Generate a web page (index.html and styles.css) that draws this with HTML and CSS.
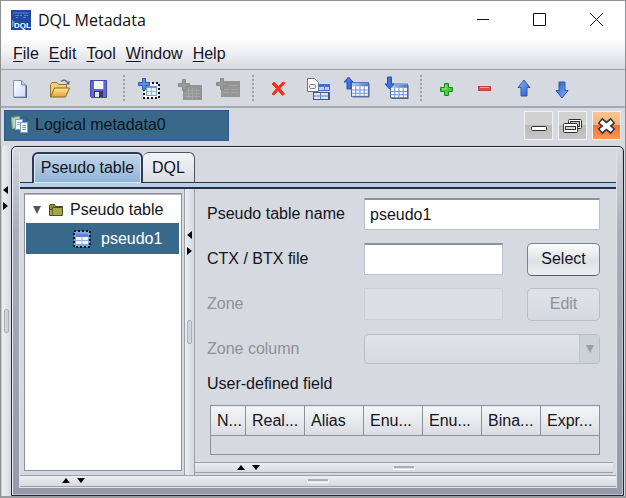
FILE: index.html
```html
<!DOCTYPE html>
<html lang="en">
<head>
<meta charset="utf-8">
<title>DQL Metadata</title>
<link rel="stylesheet" href="styles.css">
</head>
<body>
<svg class="defs" aria-hidden="true">
  <defs>
    <linearGradient id="blue" x1="0" y1="0" x2="1" y2="1"><stop offset="0" stop-color="#8fb6f2"/><stop offset="1" stop-color="#2457c4"/></linearGradient>
    <linearGradient id="head" x1="0" y1="0" x2="1" y2="0"><stop offset="0" stop-color="#a9c4f0"/><stop offset="1" stop-color="#4a78cf"/></linearGradient>
    <linearGradient id="sheet" x1="0" y1="0" x2="1" y2="1"><stop offset="0" stop-color="#ffffff"/><stop offset="1" stop-color="#cfdaf0"/></linearGradient>
    <linearGradient id="gold" x1="0" y1="0" x2="0" y2="1"><stop offset="0" stop-color="#ffe9a0"/><stop offset="1" stop-color="#e0a233"/></linearGradient>
    <symbol id="grid-blue" viewBox="0 0 18 15">
      <rect x="1.5" y="1.5" width="16" height="13" fill="#46556e"/>
      <rect x=".5" y=".5" width="16" height="13" fill="#fff" stroke="#4c6ba6"/>
      <rect x="1" y="1" width="15" height="3" fill="url(#head)"/>
      <path d="M1 7.500h15M1 10.500h15M4.500 4v9M8.500 4v9M12.500 4v9" stroke="#6d92d6" fill="none"/>
    </symbol>
    <symbol id="arrow" viewBox="0 0 14 18">
      <path d="M7 1l6 7.500H10V17H4V8.500H1z" fill="url(#blue)" stroke="#2c56b4"/>
    </symbol>
  </defs>
</svg>
<div class="window">
  <header class="titlebar">
    <svg class="logo" viewBox="0 0 20 20" width="20" height="20" aria-hidden="true">
      <rect width="20" height="20" fill="#1f489f"/>
      <path d="M2 3h16M4 5.500h4M9 5.500h2M13 5.500h4M5 7.500h2M12 7.500h3" stroke="#5f86cf" fill="none"/>
      <path d="M1.500 10v7M3 11v5" stroke="#7fa0da" fill="none"/>
      <text x="3" y="18" class="logo-text">DQL</text>
    </svg>
    <h1>DQL Metadata</h1>
    <div class="winctl">
      <button type="button" aria-label="Minimize"><svg width="14" height="14" viewBox="0 0 14 14"><path d="M1 6.500h12"/></svg></button>
      <button type="button" aria-label="Maximize"><svg width="14" height="14" viewBox="0 0 14 14"><path d="M.5 .5h12v12h-12z"/></svg></button>
      <button type="button" aria-label="Close"><svg width="14" height="14" viewBox="0 0 14 14"><path d="M0 0l13 13M13 0L0 13"/></svg></button>
    </div>
  </header>

  <nav class="menubar">
    <button type="button"><u>F</u>ile</button>
    <button type="button"><u>E</u>dit</button>
    <button type="button"><u>T</u>ool</button>
    <button type="button"><u>W</u>indow</button>
    <button type="button"><u>H</u>elp</button>
  </nav>

  <div class="toolbar" role="toolbar">
    <button type="button" aria-label="New"><svg width="24" height="24" viewBox="0 0 24 24"><path d="M5 5h8l5 5v12H5z" fill="#4b5f80"/><path d="M4.500 4.500h8l4 4.500v12h-12z" fill="url(#sheet)" stroke="#8296b8"/><path d="M12.500 4.500V9h4" fill="#b9cbe8" stroke="#7187ad"/></svg></button>
    <button type="button" aria-label="Open"><svg width="24" height="24" viewBox="0 0 24 24"><path d="M2.500 20.500v-12l1.500-2h5l1.500 2h8v4" fill="#f2cf72" stroke="#9a7433"/><path d="M2.500 21l4-9h15l-4 9z" fill="url(#gold)" stroke="#8d6424"/><path d="M13 5.500c2-2 5-2 7 1.500" fill="none" stroke="#5a7087" stroke-width="1.500"/><path d="M21.500 4.500v4h-4z" fill="#5a7087"/></svg></button>
    <button type="button" aria-label="Save"><svg width="24" height="24" viewBox="0 0 24 24"><path d="M3.500 4.500h16v17h-15l-1-1z" fill="#6267ce" stroke="#4448a8"/><rect x="7" y="5" width="9" height="8" fill="#f4f6ff"/><path d="M16.500 5v8" stroke="#8f95e0"/><rect x="7" y="15" width="9" height="6" fill="#33366c"/><rect x="8" y="16" width="4" height="5" fill="#e2e5f5"/></svg></button>
    <span class="sep"></span>
    <button type="button" aria-label="Add pseudo table"><svg width="24" height="24" viewBox="0 0 24 24"><rect x="6" y="7" width="15" height="15" fill="#fff" stroke="#111" stroke-width="2" stroke-dasharray="2 2"/><rect x="8.500" y="10.500" width="10" height="9" fill="#e7effd" stroke="#7ba0e0"/><path d="M8 11h11" stroke="#6d95dc" stroke-width="2"/><path d="M13.500 12v7M9 15.500h9" stroke="#9bb8ea"/><path d="M4.500 2.500h3v4h4v3h-4v4h-3v-4h-4v-3h4z" fill="#5d8ee0" stroke="#2c56b0"/></svg></button>
    <button type="button" aria-label="Add table" disabled><svg width="26" height="24" viewBox="0 0 26 24"><path d="M7 9h19v15H7z" fill="#959595"/><path d="M9 14.500h15M9 17.500h15M9 20.500h15M12.500 12v11M16.500 12v11M20.500 12v11" stroke="#a6a6a6"/><path d="M6.500 3.500h3v4h4v3h-4v4h-3v-4h-4v-3h4z" fill="#999" stroke="#8a8a8a"/></svg></button>
    <button type="button" aria-label="Add field" disabled><svg width="26" height="24" viewBox="0 0 26 24"><path d="M6 5h19v16H6z" fill="#959595"/><path d="M8 9.500h15M8 13.500h6M16 13.500h7M8 16.500h6M16 16.500h7" stroke="#a3a3a3"/><path d="M5.500 2.500h3v4h4v3h-4v4h-3v-4h-4v-3h4z" fill="#999" stroke="#8a8a8a"/></svg></button>
    <span class="sep"></span>
    <button type="button" aria-label="Delete"><svg width="24" height="24" viewBox="0 0 24 24"><path d="M5 8l2-2 4.500 4.500L16 6l2 1-5 5.500 4.500 5.500-2 1.500-4.500-5L7 19l-2-1 4.500-5.500z" fill="#ee3318" stroke="#e2401f"/></svg></button>
    <button type="button" aria-label="Import tables"><svg width="26" height="26" viewBox="0 0 26 26"><rect x="8" y="9" width="17" height="7" fill="#456fc4"/><rect x="8" y="17" width="17" height="8" fill="#46597c"/><path d="M9 13.500h15" stroke="#b9cff5" stroke-width="3"/><rect x="9" y="18" width="14" height="6" fill="#dce7fb"/><path d="M9 21h14M15.500 18v6M19.500 10v5" stroke="#5680d2"/><path d="M2.500 3.500h7l4 4v9h-11z" fill="#fff" stroke="#667287"/><rect x="4.500" y="9.500" width="6" height="4" rx="1" fill="#eef1f7" stroke="#777f8e"/></svg></button>
    <button type="button" aria-label="Load tables"><svg width="28" height="24" viewBox="0 0 28 24"><use href="#grid-blue" x="8" y="6" width="19" height="16"/><path d="M5.500 1l4.500 5H8v7H4V6H1z" fill="#3f74da" stroke="#2552b2"/></svg></button>
    <button type="button" aria-label="Store tables"><svg width="28" height="26" viewBox="0 0 28 26"><use href="#grid-blue" x="8" y="8" width="19" height="17"/><path d="M7.500 14L3 9h2.500V2h4v7H12z" fill="#3f74da" stroke="#2552b2"/></svg></button>
    <span class="sep"></span>
    <button type="button" aria-label="Add row"><svg width="24" height="24" viewBox="0 0 24 24"><path d="M9.500 7.500h4v4h4v4h-4v4h-4v-4h-4v-4h4z" fill="#4fca3c" stroke="#1b8a1b"/><path d="M11 9v4H7" stroke="#a2ec92" fill="none"/></svg></button>
    <button type="button" aria-label="Remove row"><svg width="24" height="24" viewBox="0 0 24 24"><rect x="4.500" y="10.500" width="12" height="4" fill="#e2493c" stroke="#b5483f"/><path d="M6 11.500h9" stroke="#f5a196"/></svg></button>
    <button type="button" aria-label="Move up"><svg width="24" height="24" viewBox="0 0 24 24"><use href="#arrow" x="4" y="3" width="14" height="18"/></svg></button>
    <button type="button" aria-label="Move down"><svg width="24" height="24" viewBox="0 0 24 24"><g transform="rotate(180 11 12)"><use href="#arrow" x="5" y="1" width="14" height="18"/></g></svg></button>
  </div>

  <div class="docbar">
    <button type="button" class="doctab">
      <svg width="20" height="20" viewBox="0 0 20 20" aria-hidden="true"><path d="M1.500 2.500l8-1 1 11-8 1z" fill="#b9d8bd" stroke="#7fa58c"/><rect x="5.500" y="4.500" width="7" height="10" fill="#eef4ff" stroke="#8aa0c0"/><path d="M7 7.500h4M7 9.500h4" stroke="#8aa6d8"/><rect x="10.500" y="7.500" width="7" height="10" fill="#f6f9ff" stroke="#7f9ccb"/><path d="M12 10.500h4M12 12.500h4M12 14.500h4" stroke="#7f9fda"/><path d="M12 3c3-2 5-1 6 3" stroke="#2e4f68" fill="none" stroke-dasharray="2 1"/></svg>
      Logical metadata0
    </button>
    <div class="docctl">
      <button type="button" aria-label="Minimize document"><svg width="28" height="28" viewBox="0 0 28 28"><rect x="6.500" y="14.500" width="15" height="4" rx="1" fill="#fff" stroke="#333"/></svg></button>
      <button type="button" aria-label="Restore document"><svg width="28" height="28" viewBox="0 0 28 28"><rect x="9.500" y="7.500" width="13" height="9" rx="1" fill="#fff" stroke="#333"/><rect x="11.500" y="9.500" width="9" height="5" fill="#c9c9c9" stroke="#333"/><rect x="4.500" y="11.500" width="14" height="9" rx="1" fill="#fff" stroke="#333"/><rect x="6.500" y="14.500" width="10" height="3" fill="#d8d8d8" stroke="#333"/></svg></button>
      <button type="button" class="close" aria-label="Close document"><svg width="28" height="28" viewBox="0 0 28 28"><path d="M7 8.500l13 11M20 8.500l-13 11" stroke="#333" stroke-width="7"/><path d="M8 9.500l11 9M19 9.500l-11 9" stroke="#fff" stroke-width="4"/></svg></button>
    </div>
  </div>

  <main class="desk">
    <div class="split-v outer" role="separator">
      <span class="arrows"><svg width="6" height="8"><path d="M5 0v8L0 4z"/></svg><svg width="6" height="8"><path d="M0 0v8l5-4z"/></svg></span>
      <span class="grip"></span>
    </div>
    <section class="frame">
      <div class="content">
        <div class="tabs" role="tablist">
          <button type="button" role="tab" aria-selected="true" class="on">Pseudo table</button>
          <button type="button" role="tab" aria-selected="false">DQL</button>
        </div>
        <div class="panes">
          <div class="treebox">
            <ul class="tree">
              <li class="root"><svg width="10" height="10"><path d="M1 1h8L5 9z" fill="#555"/></svg><svg width="16" height="16" viewBox="0 0 16 16"><path d="M1.500 12.500v-9l1-1h4l1 2h7v8" fill="#8d8d35" stroke="#46481d"/><path d="M1.500 13.500v-6h3v-2h10v8z" fill="#a4a548" stroke="#4c4e20"/><path d="M4.500 7v6" stroke="#6a6b2a"/></svg><span>Pseudo table</span></li>
              <li class="leaf"><svg width="18" height="18" viewBox="0 0 18 18"><rect x="1" y="1" width="16" height="16" fill="#7fa7dd" stroke="#111" stroke-width="2" stroke-dasharray="2 2"/><rect x="3" y="4" width="12" height="10" fill="#f2f6fe"/><rect x="3" y="4" width="12" height="3" fill="#5a80dc"/><path d="M9 7v7M3 10.500h12" stroke="#9ab2e2"/></svg><span>pseudo1</span></li>
            </ul>
          </div>
          <div class="split-v" role="separator">
            <span class="arrows"><svg width="6" height="8"><path d="M5 0v8L0 4z"/></svg><svg width="6" height="8"><path d="M0 0v8l5-4z"/></svg></span>
            <span class="grip"></span>
          </div>
          <div class="detail">
            <form class="form">
              <label for="name">Pseudo table name</label>
              <input id="name" class="wide" type="text" value="pseudo1">
              <label for="file">CTX / BTX file</label>
              <input id="file" type="text">
              <button type="button">Select</button>
              <label for="zone" class="off">Zone</label>
              <input id="zone" type="text" disabled>
              <button type="button" disabled>Edit</button>
              <label for="column" class="off">Zone column</label>
              <div class="combo wide">
                <select id="column" disabled><option></option></select>
                <span class="drop"><svg width="8" height="8"><path d="M0 0h8L4 8z" fill="#9a9da4"/></svg></span>
              </div>
            </form>
            <div class="caption" id="fields">User-defined field</div>
            <div class="fields-box">
              <table class="fields" aria-labelledby="fields">
                <thead><tr><th class="first">N...</th><th>Real...</th><th>Alias</th><th>Enu...</th><th>Enu...</th><th>Bina...</th><th>Expr...</th></tr></thead>
                <tbody><tr><td colspan="7"></td></tr></tbody>
              </table>
            </div>
            <div class="split-h inner" role="separator">
              <span class="arrows"><svg width="8" height="5"><path d="M0 5h8L4 0z"/></svg><svg width="8" height="5"><path d="M0 0h8L4 5z"/></svg></span>
              <span class="grip"></span>
            </div>
          </div>
        </div>
        <div class="split-h" role="separator">
          <span class="arrows"><svg width="8" height="5"><path d="M0 5h8L4 0z"/></svg><svg width="8" height="5"><path d="M0 0h8L4 5z"/></svg></span>
          <span class="grip"></span>
        </div>
      </div>
    </section>
  </main>
</div>
</body>
</html>
```
FILE: styles.css
```css
* { box-sizing: border-box; }

body {
  margin: 0;
  font: 16px/20px "Liberation Sans", Arial, sans-serif;
  color: #14141c;
  background: #d6d9df;
}

button, input, select { font: inherit; color: inherit; margin: 0; }
button { padding: 0; border: 0; background: none; }
svg { display: block; flex: none; }
.defs { position: absolute; width: 0; height: 0; }

.window {
  display: flex;
  flex-direction: column;
  height: 100vh;
  border: 1px solid #8f9092;
  border-bottom: 2px solid #9a9b9d;
}

/* Title bar */
.titlebar {
  display: flex;
  align-items: center;
  flex: none;
  height: 37px;
  padding-left: 10px;
  background: #fff;
}
.logo-text { font: bold 8px "Liberation Sans", sans-serif; fill: #fff; }
.titlebar h1 {
  flex: 1;
  margin: 0 0 0 7px;
  font: 16px/20px "Open Sans", "Noto Sans", sans-serif;
  color: #111;
}
.winctl { display: flex; }
.winctl button { display: grid; place-items: center; width: 57px; height: 36px; }
.winctl path { fill: none; stroke: #111; }

/* Menu bar */
.menubar {
  display: flex;
  align-items: center;
  flex: none;
  gap: 10px;
  height: 32px;
  padding: 0 12px;
  background: linear-gradient(#fff, #f1f2f6 40%, #d6d9df);
  border-bottom: 1px solid #9a9ea8;
}
.menubar u { text-underline-offset: 2px; }

/* Toolbar */
.toolbar {
  display: flex;
  align-items: center;
  flex: none;
  height: 38px;
  border-bottom: 2px solid #a3a8b2;
}
.toolbar button { display: grid; place-items: center; width: 39px; height: 30px; }
.sep { width: 12px; height: 30px; background: radial-gradient(circle, #9da1aa 1px, transparent 1px) center / 12px 4px; }

/* Document bar */
.docbar {
  display: flex;
  align-items: center;
  justify-content: space-between;
  flex: none;
  height: 38px;
  padding: 0 4px 4px 3px;
}
.doctab {
  display: flex;
  align-items: center;
  gap: 5px;
  width: 225px;
  height: 31px;
  padding: 0 5px;
  background: #39698a;
  border: 1px solid #2f5a90;
  color: #091420;
}
.docctl { display: flex; gap: 5px; }
.docctl button {
  display: grid;
  place-items: center;
  width: 29px;
  height: 29px;
  border: 1px solid #f1f1f1;
  background: linear-gradient(#d2d2d2 50%, #bababa 50%, #c6c6c6);
}
.docctl .close { background: linear-gradient(#f9c491, #f7b27c 48%, #f0713a 50%, #f99853); }

/* Desktop and internal frame */
.desk { display: flex; flex: 1; min-height: 0; padding-right: 1px; }
.frame {
  display: flex;
  flex: 1;
  min-width: 0;
  padding: 4px 6px 7px 7px;
  border: 1px solid #24272e;
  border-radius: 5px 5px 0 0;
  background: linear-gradient(#d6d9df, #a9adb7 25%, #969aa8);
  box-shadow: inset 1px 1px #eceef2, inset -1px -1px #bcc0c9;
}
.content { display: flex; flex-direction: column; flex: 1; min-width: 0; background: #d6d9df; border: 1px solid #dfe2e8; border-top: 0; }

.tabs {
  display: flex;
  align-items: flex-end;
  flex: none;
  height: 38px;
  padding-left: 12px;
  border-bottom: 2px solid #20304a;
  background: linear-gradient(#d6d9df 31px, #20304a 31px, #20304a 32px, #b9cfe6 32px);
}
.tabs button {
  align-self: flex-start;
  width: 52px;
  height: 31px;
  margin-top: 1px;
  border: 1px solid #4d5361;
  border-left: 0;
  border-bottom-color: #20304a;
  border-radius: 6px 6px 0 0;
  background: linear-gradient(#f4f5f8, #d9dce2);
}
.tabs .on {
  width: 111px;
  padding-bottom: 2px;
  border: 2px solid #2b3b57;
  border-bottom: 0;
  background: linear-gradient(#c3d6ea, #8eb4d8);
  box-shadow: inset 0 0 0 1px #dce9f5;
}

.panes { display: flex; flex: 1; min-height: 0; }
.treebox { width: 158px; margin: 4px 2px 4px 4px; padding: 3px 2px 0 1px; background: #fff; border: 1px solid #8c9099; box-shadow: inset 0 1px #b7bac1; flex: none; }
.tree { margin: 0; padding: 0; list-style: none; }
.tree li { display: flex; align-items: center; height: 26px; }
.root { gap: 6px; padding-left: 6px; }
.tree .leaf { gap: 10px; height: 31px; padding-left: 47px; background: #39698a; color: #fff; }

/* Split bars */
.split-v {
  position: relative;
  flex: none;
  width: 11px;
  border: solid #9a9ea8;
  border-width: 0 1px;
  background: linear-gradient(90deg, #eceef2, #d6d9df);
}
.split-v.outer { width: 10px; border-left-color: #c5c8ce; border-right: 0; }
.split-v .arrows { display: grid; gap: 8px; padding: 42px 0 0 2px; }
.outer .arrows { padding: 40px 0 0 1px; }
.split-v .grip { position: absolute; top: 50%; left: 2px; width: 5px; height: 24px; margin-top: -12px; border: 1px solid #adb0b7; border-radius: 2px; background: #d0d3d9; }
.split-h {
  position: relative;
  flex: none;
  height: 12px;
  border: solid #9a9ea8;
  border-width: 1px 0;
  background: linear-gradient(#eceef2, #d6d9df);
}
.split-h .arrows { display: flex; gap: 7px; padding: 2px 0 0 42px; }
.split-h .grip { position: absolute; top: 3px; left: 50%; width: 22px; height: 4px; margin-left: -11px; border: 1px solid #fff; border-top: 2px solid #abaeb6; border-radius: 2px; }

/* Detail form */
.detail { display: flex; flex-direction: column; flex: 1; min-width: 0; }
.form {
  display: grid;
  grid-template-columns: 157px 1fr 73px;
  grid-auto-rows: 32px;
  row-gap: 13px;
  align-items: center;
  padding: 9px 16px 0 12px;
}
.form input {
  width: 100%;
  min-width: 0;
  height: 32px;
  padding: 0 5px;
  border: 1px solid #bfc2c9;
  border-top: 2px solid #8d9199;
  background: #fff;
}
.form input:not(.wide) { justify-self: start; width: calc(100% - 24px); }
.form .wide { grid-column: 2 / 4; }
.form .off { color: #8e9198; }
.form input:disabled { border-color: #ced1d7; border-top-width: 1px; background: #dcdfe4; }
.form button {
  height: 33px;
  border: 1px solid #7d818a;
  border-bottom-color: #555a64;
  border-radius: 5px;
  background: linear-gradient(#fafbfc, #dee1e7 55%, #eceef2);
}
.form button:disabled { border-color: #b9bdc5; color: #8e9198; background: linear-gradient(#dfe2e7, #d6d9df); }
.combo { position: relative; height: 30px; }
.combo select { width: 100%; height: 100%; appearance: none; border: 1px solid #b9bdc5; border-radius: 4px; background: linear-gradient(#dfe2e7, #d6d9df); opacity: 1; }
.drop { position: absolute; top: 1px; right: 1px; bottom: 1px; display: grid; place-items: center; width: 20px; border-left: 1px solid #c0c4cc; border-radius: 0 3px 3px 0; background: #ccd1d9; }
.caption { margin: 9px 16px 0 12px; }

/* Fields table */
.fields-box { padding: 11px 16px 0 15px; }
.fields {
  table-layout: fixed;
  width: 100%;
  border: 1px solid #8d919b;
  border-collapse: collapse;
}
.fields th {
  height: 30px;
  padding: 0 0 0 6px;
  border: 1px solid #8d919b;
  text-align: left;
  font-weight: normal;
  white-space: nowrap;
  background: linear-gradient(#f5f6f8, #d9dce2);
}
.fields .first { width: 35px; }
.fields td { height: 19px; padding: 0; }
.split-h.inner { height: 11px; margin: auto 3px 2px 0; }
```
